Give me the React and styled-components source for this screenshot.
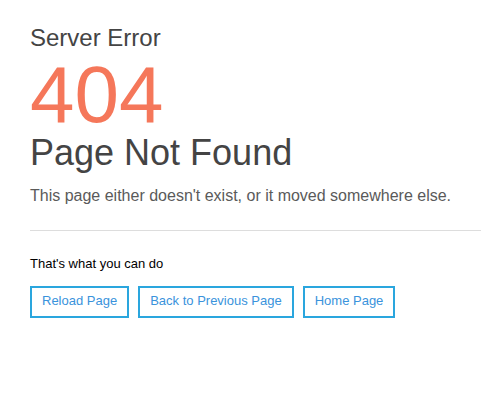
import React from "react";
import styled, { createGlobalStyle } from "styled-components";

const GlobalStyle = createGlobalStyle`
  html, body {
    margin: 0;
    padding: 0;
    background: #fff;
  }
  body {
    font-family: "Liberation Sans", Arial, sans-serif;
  }
`;

const Page = styled.main`
  padding: 24px 0 0 30px;
  color: #444;
`;

const Kicker = styled.div`
  font-size: 24px;
  line-height: 28px;
  color: #444;
`;

const Code = styled.div`
  margin-top: 3px;
  font-size: 80px;
  line-height: 80px;
  color: #f5775a;
`;

const Title = styled.h1`
  margin: 0;
  font-size: 36px;
  line-height: 36px;
  font-weight: normal;
  color: #444;
`;

const Lead = styled.p`
  margin: 15px 0 0;
  font-size: 16px;
  line-height: 20px;
  color: #5a5a5a;
`;

const Divider = styled.hr`
  margin: 24px 0 0;
  border: 0;
  border-top: 1px solid #ddd;
`;

const Hint = styled.div`
  margin-top: 25px;
  font-size: 13px;
  line-height: 16px;
  color: #000;
`;

const Actions = styled.div`
  display: flex;
  gap: 9px;
  margin-top: 14px;
`;

const Action = styled.button`
  padding: 5px 10px 7px;
  border: 2px solid #2aa6de;
  background: #fff;
  color: #3a93dc;
  font-family: inherit;
  font-size: 13px;
  line-height: 16px;
  cursor: pointer;
`;

const actions = ["Reload Page", "Back to Previous Page", "Home Page"];

const App = () => {
  return (
    <>
      <GlobalStyle />
      <Page>
        <Kicker>Server Error</Kicker>
        <Code>404</Code>
        <Title>Page Not Found</Title>
        <Lead>This page either doesn't exist, or it moved somewhere else.</Lead>
        <Divider />
        <Hint>That's what you can do</Hint>
        <Actions>
          {actions.map((label) => (
            <Action key={label}>{label}</Action>
          ))}
        </Actions>
      </Page>
    </>
  );
};

export default App;
